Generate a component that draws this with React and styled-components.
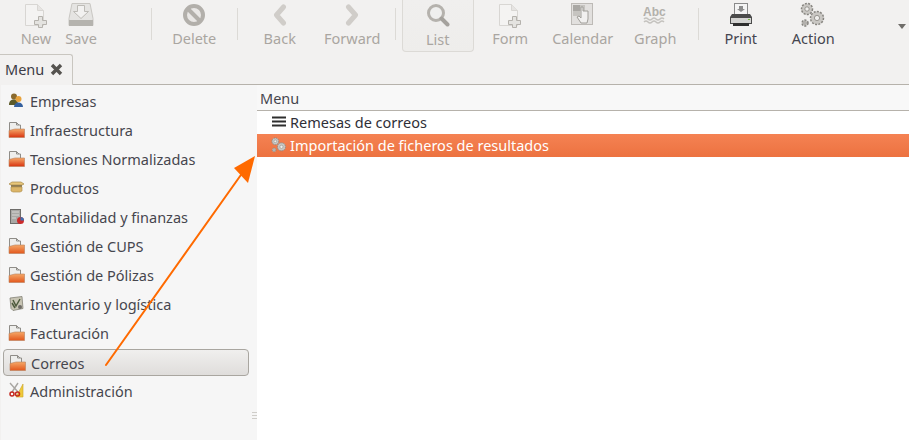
import React from 'react'
import styled, { createGlobalStyle } from 'styled-components'

const Global = createGlobalStyle`
  html, body { margin: 0; padding: 0; background: #f2f1f0; overflow: hidden; }
  body { font-family: "Noto Sans", "Open Sans", sans-serif; }
`

const Page = styled.div`
  position: relative;
  width: 909px;
  height: 440px;
  overflow: hidden;
  display: flex;
  flex-direction: column;
  background: #f2f1f0;
  color: #46464e;
  font-size: 14.5px;
`
const Toolbar = styled.div`
  height: 54px;
  display: flex;
  align-items: flex-start;
  flex-shrink: 0;
`
const FirstGroup = styled.div`
  width: 151px;
  padding-left: 14px;
  box-sizing: border-box;
  display: flex;
`
const ToolButton = styled.div`
  width: ${p => p.$width || 72.5}px;
  height: 52px;
  box-sizing: border-box;
  padding-top: ${p => (p.$active ? 1 : 0)}px;
  display: flex;
  flex-direction: column;
  align-items: center;
  flex-shrink: 0;
  color: ${p => (p.$enabled ? '#45454f' : '#aaa6a1')};
  ${p => p.$active && `
    border: 1px solid #dcdad6;
    border-top: 0;
    border-radius: 0 0 4px 4px;
    background: linear-gradient(#f0efee, #eeedeb);
  `}
`
const IconSlot = styled.div`
  height: 29px;
  display: flex;
  align-items: center;
  justify-content: center;
  flex-shrink: 0;
`
const ToolLabel = styled.span`
  font-size: 14.5px;
  line-height: 18px;
  white-space: nowrap;
`
const Separator = styled.div`
  width: 1px;
  height: 32px;
  margin: 8px 6px 0 ${p => (p.$flush ? 0 : 6)}px;
  background: #dcdad6;
  flex-shrink: 0;
`
const Overflow = styled.div`
  margin: 24px 3px 0 auto;
  width: 0;
  height: 0;
  border-left: 4px solid transparent;
  border-right: 4px solid transparent;
  border-top: 5px solid #6f6d69;
`
const TabBar = styled.div`
  height: 31px;
  display: flex;
  flex-shrink: 0;
  border-bottom: 1px solid #b6b2ab;
  box-sizing: border-box;
`
const Tab = styled.div`
  width: 73px;
  height: 31px;
  box-sizing: border-box;
  padding: 0 0 2px 5px;
  display: flex;
  align-items: center;
  gap: 6px;
  border: 1px solid #c9c6c0;
  border-left: 0;
  border-bottom: 0;
  border-radius: 0 3px 0 0;
  background: #f2f1f0;
  color: #3c3c46;
`
const Body = styled.div`
  flex: 1;
  display: flex;
  min-height: 0;
`
const Sidebar = styled.div`
  position: relative;
  width: 256px;
  margin-left: 1px;
  padding-top: 2px;
  box-sizing: border-box;
  background: #f6f6f6;
  flex-shrink: 0;
`
const SideRow = styled.div`
  height: ${p => (p.$selected ? 27 : 29)}px;
  display: flex;
  align-items: center;
  gap: 5px;
  box-sizing: border-box;
  padding-left: ${p => (p.$selected ? 5 : 7)}px;
  padding-bottom: ${p => (p.$selected ? 0 : 2)}px;
  margin: ${p => (p.$selected ? '1px 8px 1px 2px' : '0')};
  white-space: nowrap;
  ${p => p.$selected && `
    border: 1px solid #a9a6a0;
    border-radius: 4px;
    background: linear-gradient(#f0efee, #dfdddb);
  `}
`
const Grip = styled.div`
  position: absolute;
  right: 0;
  top: 327px;
  width: 5px;
  height: 8px;
  background: repeating-linear-gradient(#cfcdc9 0 1px, transparent 1px 3px);
`
const Content = styled.div`
  flex: 1;
  background: #fff;
  display: flex;
  flex-direction: column;
`
const ListHeader = styled.div`
  height: 26px;
  padding-left: 3px;
  box-sizing: border-box;
  display: flex;
  align-items: center;
  border-bottom: 1px solid #b6b2ab;
  background: #f8f8f8;
`
const ListRow = styled.div`
  height: 23px;
  box-sizing: border-box;
  padding: 0 0 2px 14px;
  display: flex;
  align-items: center;
  gap: 3px;
  color: ${p => (p.$selected ? '#fff' : '#2f2f37')};
  background: ${p => (p.$selected ? 'linear-gradient(#f58253, #ec7240)' : 'transparent')};
`
const ArrowLayer = styled.svg`
  position: absolute;
  left: 0;
  top: 0;
  pointer-events: none;
`

const DocPlus = () => (
  <svg width="24" height="26" viewBox="0 0 24 26">
    <path d="M1.500 2.500h12l6 6v15h-18z" fill="#f4f3f2" stroke="#d8d6d3" />
    <path d="M13.500 2.500v6h6" fill="#e6e4e2" stroke="#d8d6d3" />
    <path d="M14.500 14.500h4v4h4v4h-4v3h-4v-3h-4v-4h4z" fill="#e4e3e0" stroke="#b5b2ad" />
  </svg>
)
const SaveIcon = () => (
  <svg width="26" height="26" viewBox="0 0 26 26">
    <path d="M4 1.500h18l3 15v7H1v-7z" fill="#e5e4e2" stroke="#c9c7c3" />
    <rect x="1" y="18" width="24" height="6" fill="#b5b3ae" />
    <path d="M9.500 3.500h7v6h4l-7.500 7-7.500-7h4z" fill="#f2f1f0" stroke="#bdbbb6" />
  </svg>
)
const NoEntry = () => (
  <svg width="24" height="24" viewBox="0 0 24 24">
    <circle cx="12" cy="12" r="9" fill="#e9e7e5" stroke="#b2afaa" strokeWidth="4" />
    <path d="M6 6l12 12" stroke="#b2afaa" strokeWidth="4" />
  </svg>
)
const Chevron = ({ flip }) => (
  <svg width="14" height="22" viewBox="0 0 14 22">
    <path d={flip ? 'M3.500 3l7 8-7 8' : 'M10.500 3l-7 8 7 8'} fill="none" stroke="#d0cdc9" strokeWidth="5" strokeLinejoin="round" strokeLinecap="round" />
  </svg>
)
const Magnifier = () => (
  <svg width="24" height="26" viewBox="0 0 24 26">
    <circle cx="10" cy="10" r="7.500" fill="#efefee" stroke="#b5b2ad" strokeWidth="3" />
    <path d="M15.500 15.500l6 6" stroke="#a5a29d" strokeWidth="4" strokeLinecap="round" />
  </svg>
)
const CalendarHand = () => (
  <svg width="24" height="24" viewBox="0 0 24 24">
    <rect x=".5" y=".5" width="21" height="21" fill="#e2e0de" stroke="#bdbab6" />
    <rect x="2" y="2" width="7" height="6" fill="#a9a7a3" />
    <rect x="9" y="2" width="5" height="6" fill="#c6c4c0" />
    <rect x="2" y="8" width="7" height="5" fill="#c6c4c0" />
    <path d="M10 8v-4h2v4h5v8l-1 4h-6l-4-6 2-1 2 2z" fill="#f1f0ef" stroke="#a09e99" />
  </svg>
)
const GraphAbc = () => (
  <svg width="24" height="24" viewBox="0 0 24 24">
    <text x="0" y="13" fontFamily="Liberation Sans, sans-serif" fontWeight="700" fontSize="12" fill="#b3b0ab">Abc</text>
    <path d="M1 16q2-2 4 0t4 0 4 0 4 0 4 0M1 19q2-2 4 0t4 0 4 0 4 0 4 0" fill="none" stroke="#c4c2be" strokeWidth="1.500" />
  </svg>
)
const Printer = () => (
  <svg width="24" height="26" viewBox="0 0 24 26">
    <rect x="5.500" y="1.500" width="13" height="12" fill="#f4f4f4" stroke="#8a8a8a" />
    <path d="M10 4h4v3h2l-4 3-4-3h2z" fill="#8c8c8c" />
    <path d="M3 12h18l2 3v7H1v-7z" fill="#4b4b4b" />
    <rect x="2" y="16" width="20" height="5" fill="#d4d4d2" />
    <rect x="4" y="21" width="16" height="3" fill="#2f2f2f" />
    <rect x="19" y="17" width="2" height="1" fill="#7ab648" />
  </svg>
)
const Gear = ({ x, y, r }) => (
  <g transform={`translate(${x} ${y})`}>
    <circle r={r} fill="#c9c7c3" stroke="#86847f" strokeWidth="1.500" strokeDasharray="2 1.300" />
    <circle r={r * 0.4} fill="#efeeec" stroke="#86847f" strokeWidth=".8" />
  </g>
)
const Gears = ({ size = 26 }) => (
  <svg width={size} height={size} viewBox="0 0 26 26">
    <Gear x={7} y={7} r={5.500} />
    <Gear x={17} y={16} r={6.500} />
    <Gear x={5} y={21} r={3} />
  </svg>
)
const Folder = ({ red }) => {
  const id = red ? 'folderRed' : 'folderOrange'
  return (
    <svg width="17" height="18" viewBox="0 0 17 18">
      <defs>
        <linearGradient id={id} x1="0" y1="0" x2="0" y2="1">
          <stop offset="0" stopColor="#f5a868" />
          <stop offset="1" stopColor={red ? '#d8330f' : '#e2571c'} />
        </linearGradient>
      </defs>
      <path d="M1.500 1.500h7l2.500 2.500h1.500v6h-11z" fill="#eeeeec" stroke="#8f8d88" />
      <path d="M8.500 1.500v2.500h2.500" fill="none" stroke="#8f8d88" />
      <path d="M1 9.500l6-1.500h9.500v8.500H1z" fill={`url(#${id})`} stroke="#b8805c" strokeWidth=".6" />
    </svg>
  )
}
const People = () => (
  <svg width="17" height="17" viewBox="0 0 17 17">
    <circle cx="6" cy="4.500" r="3" fill="#8a6a2e" />
    <path d="M1 13c0-4 2-5.500 5-5.500s4 2 4 5.500z" fill="#5c5a28" />
    <circle cx="10.500" cy="7" r="3" fill="#e8a33c" />
    <path d="M6 15c0-3 2-4.500 4.500-4.500s4.500 1.500 4.500 4.500z" fill="#34609e" />
  </svg>
)
const Box = () => (
  <svg width="17" height="17" viewBox="0 0 17 17">
    <path d="M1 5l3-2h9l3 2-2 1H3z" fill="#e8c67a" stroke="#a88a4a" strokeWidth=".7" />
    <rect x="3" y="6" width="11" height="2" fill="#8f7b52" />
    <path d="M3 8h11v4l-2 1H5l-2-1z" fill="#dcb568" stroke="#b39352" strokeWidth=".7" />
  </svg>
)
const Ledger = () => (
  <svg width="17" height="17" viewBox="0 0 17 17">
    <rect x="2.500" y="1.500" width="10" height="14" fill="#a9a8a5" stroke="#6e6d6a" />
    <path d="M4 4h7M4 7h7M4 10h4" stroke="#d8d7d4" />
    <circle cx="12.500" cy="12.500" r="3.500" fill="#cc2b2b" />
    <path d="M12.500 12.500V9a3.500 3.500 0 0 1 3.500 3.500z" fill="#3c6fb0" />
  </svg>
)
const Inventory = () => (
  <svg width="17" height="17" viewBox="0 0 17 17">
    <path d="M2 3l12-1.500 1 12-10 2-2-2z" fill="#c8c5b4" stroke="#77756a" strokeWidth=".7" />
    <path d="M5 5l3 6 4-7M4 8l3 5" fill="none" stroke="#4e5a3c" strokeWidth="1.500" />
    <circle cx="12" cy="12" r="2" fill="#6e6c66" />
  </svg>
)
const Scissors = () => (
  <svg width="17" height="17" viewBox="0 0 17 17">
    <path d="M15 2v13H8z" fill="#efc93a" stroke="#c9a526" strokeWidth=".6" />
    <path d="M2 1l8 9M10 1l-6 9" stroke="#a8a6a2" strokeWidth="1.400" />
    <circle cx="4" cy="12" r="2" fill="none" stroke="#c5281f" strokeWidth="1.500" />
    <circle cx="9.500" cy="12" r="2" fill="none" stroke="#c5281f" strokeWidth="1.500" />
  </svg>
)
const Lines = () => (
  <svg width="16" height="14" viewBox="0 0 16 14">
    <path d="M1 2.500h14M1 6.500h14M1 10.500h14" stroke="#2e2e2e" strokeWidth="2" />
  </svg>
)
const CloseX = () => (
  <svg width="13" height="13" viewBox="0 0 13 13">
    <path d="M2 2l9 9M11 2l-9 9" stroke="#55534f" strokeWidth="3.400" />
  </svg>
)

const sideItems = [
  { label: 'Empresas', icon: <People /> },
  { label: 'Infraestructura', icon: <Folder red /> },
  { label: 'Tensiones Normalizadas', icon: <Folder red /> },
  { label: 'Productos', icon: <Box /> },
  { label: 'Contabilidad y finanzas', icon: <Ledger /> },
  { label: 'Gestión de CUPS', icon: <Folder /> },
  { label: 'Gestión de Pólizas', icon: <Folder /> },
  { label: 'Inventario y logística', icon: <Inventory /> },
  { label: 'Facturación', icon: <Folder /> },
  { label: 'Correos', icon: <Folder />, selected: true },
  { label: 'Administración', icon: <Scissors /> },
]

function Tool({ icon, label, ...rest }) {
  return (
    <ToolButton {...rest}>
      <IconSlot>{icon}</IconSlot>
      <ToolLabel>{label}</ToolLabel>
    </ToolButton>
  )
}

export default function App() {
  return (
    <Page>
      <Global />
      <Toolbar>
        <FirstGroup>
          <Tool $width={44} icon={<DocPlus />} label="New" />
          <Tool $width={46} icon={<SaveIcon />} label="Save" />
        </FirstGroup>
        <Separator $flush />
        <Tool icon={<NoEntry />} label="Delete" />
        <Separator />
        <Tool icon={<Chevron />} label="Back" />
        <Tool icon={<Chevron flip />} label="Forward" />
        <Separator />
        <Tool $active icon={<Magnifier />} label="List" />
        <Tool icon={<DocPlus />} label="Form" />
        <Tool icon={<CalendarHand />} label="Calendar" />
        <Tool icon={<GraphAbc />} label="Graph" />
        <Separator />
        <Tool $enabled icon={<Printer />} label="Print" />
        <Tool $enabled icon={<Gears />} label="Action" />
        <Overflow />
      </Toolbar>
      <TabBar>
        <Tab>Menu <CloseX /></Tab>
      </TabBar>
      <Body>
        <Sidebar>
          {sideItems.map(item => (
            <SideRow key={item.label} $selected={item.selected}>
              {item.icon}
              <span>{item.label}</span>
            </SideRow>
          ))}
          <Grip />
        </Sidebar>
        <Content>
          <ListHeader>Menu</ListHeader>
          <ListRow><Lines /> Remesas de correos</ListRow>
          <ListRow $selected><Gears size={16} /> Importación de ficheros de resultados</ListRow>
        </Content>
      </Body>
      <ArrowLayer width="909" height="440" viewBox="0 0 909 440">
        <path d="M106 365L243 172" stroke="#ff6a00" strokeWidth="2" strokeLinecap="round" />
        <path d="M255 156L234 168L248 183z" fill="#ff6a00" />
      </ArrowLayer>
    </Page>
  )
}
